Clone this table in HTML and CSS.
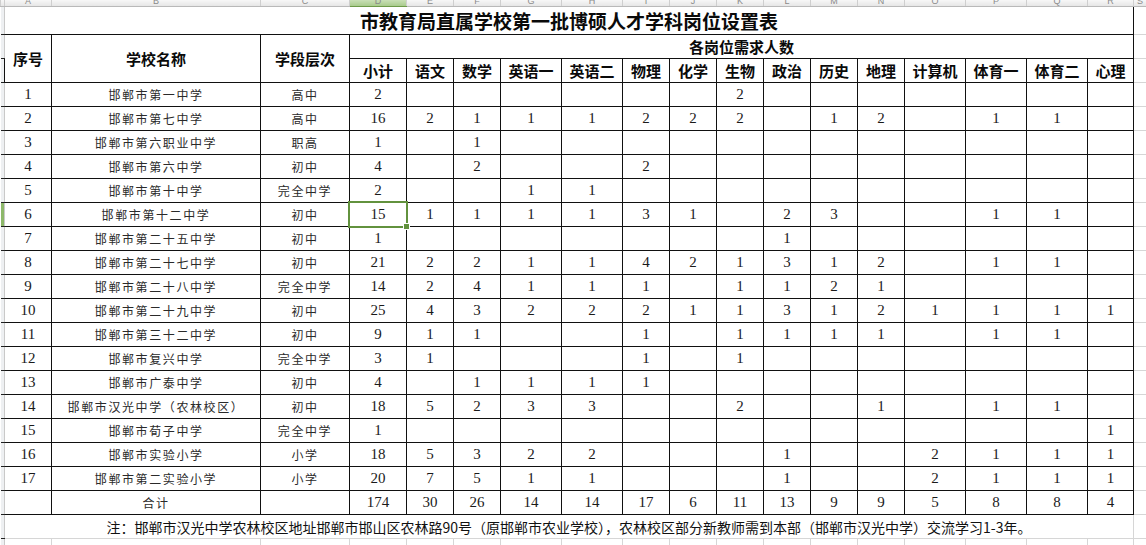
FILE: index.html
```html
<!DOCTYPE html>
<html lang="zh-CN">
<head>
<meta charset="utf-8">
<title>市教育局直属学校第一批博硕人才学科岗位设置表</title>
<link rel="stylesheet" href="styles.css">
</head>
<body>
<table class="sheet">
<colgroup>
<col class="w-rh"><col class="w-a"><col class="w-b"><col class="w-c"><col class="w-d">
<col class="w-s"><col class="w-s"><col class="w-m"><col class="w-m">
<col class="w-s"><col class="w-s"><col class="w-s"><col class="w-s"><col class="w-s"><col class="w-s">
<col class="w-m"><col class="w-m"><col class="w-m"><col class="w-r"><col class="w-x">
</colgroup>
<tr class="colhdr">
<th class="rh corner"></th>
<th><div class="lt"><span>A</span></div></th><th><div class="lt"><span>B</span></div></th><th><div class="lt"><span>C</span></div></th>
<th class="selcol"><div class="lt"><span>D</span></div></th><th><div class="lt"><span>E</span></div></th><th><div class="lt"><span>F</span></div></th>
<th><div class="lt"><span>G</span></div></th><th><div class="lt"><span>H</span></div></th><th><div class="lt"><span>I</span></div></th>
<th><div class="lt"><span>J</span></div></th><th><div class="lt"><span>K</span></div></th><th><div class="lt"><span>L</span></div></th>
<th><div class="lt"><span>M</span></div></th><th><div class="lt"><span>N</span></div></th><th><div class="lt"><span>O</span></div></th>
<th><div class="lt"><span>P</span></div></th><th><div class="lt"><span>Q</span></div></th><th><div class="lt"><span>R</span></div></th>
<th><div class="lt"><span>S</span></div></th>
</tr>
<tr class="trow">
<td class="rh"></td>
<td class="title" colspan="18">市教育局直属学校第一批博硕人才学科岗位设置表</td>
<td class="gx"></td>
</tr>
<tr class="hrow">
<td class="rh"></td>
<th class="g h" rowspan="2">序号</th>
<th class="g h" rowspan="2">学校名称</th>
<th class="g h" rowspan="2">学段层次</th>
<th class="g h" colspan="15">各岗位需求人数</th>
<td class="gx"></td>
</tr>
<tr class="hrow">
<td class="rh"></td>
<th class="g h">小计</th><th class="g h">语文</th><th class="g h">数学</th><th class="g h">英语一</th><th class="g h">英语二</th>
<th class="g h">物理</th><th class="g h">化学</th><th class="g h">生物</th><th class="g h">政治</th><th class="g h">历史</th>
<th class="g h">地理</th><th class="g h">计算机</th><th class="g h">体育一</th><th class="g h">体育二</th><th class="g h">心理</th>
<td class="gx"></td>
</tr>
<tr class="r"><td class="rh"></td><td class="g n">1</td><td class="g t">邯郸市第一中学</td><td class="g t">高中</td><td class="g n">2</td>
<td class="g n"></td><td class="g n"></td><td class="g n"></td><td class="g n"></td><td class="g n"></td><td class="g n"></td><td class="g n">2</td><td class="g n"></td><td class="g n"></td><td class="g n"></td><td class="g n"></td><td class="g n"></td><td class="g n"></td><td class="g n"></td><td class="gx"></td></tr>
<tr class="r"><td class="rh"></td><td class="g n">2</td><td class="g t">邯郸市第七中学</td><td class="g t">高中</td><td class="g n">16</td>
<td class="g n">2</td><td class="g n">1</td><td class="g n">1</td><td class="g n">1</td><td class="g n">2</td><td class="g n">2</td><td class="g n">2</td><td class="g n"></td><td class="g n">1</td><td class="g n">2</td><td class="g n"></td><td class="g n">1</td><td class="g n">1</td><td class="g n"></td><td class="gx"></td></tr>
<tr class="r"><td class="rh"></td><td class="g n">3</td><td class="g t">邯郸市第六职业中学</td><td class="g t">职高</td><td class="g n">1</td>
<td class="g n"></td><td class="g n">1</td><td class="g n"></td><td class="g n"></td><td class="g n"></td><td class="g n"></td><td class="g n"></td><td class="g n"></td><td class="g n"></td><td class="g n"></td><td class="g n"></td><td class="g n"></td><td class="g n"></td><td class="g n"></td><td class="gx"></td></tr>
<tr class="r"><td class="rh"></td><td class="g n">4</td><td class="g t">邯郸市第六中学</td><td class="g t">初中</td><td class="g n">4</td>
<td class="g n"></td><td class="g n">2</td><td class="g n"></td><td class="g n"></td><td class="g n">2</td><td class="g n"></td><td class="g n"></td><td class="g n"></td><td class="g n"></td><td class="g n"></td><td class="g n"></td><td class="g n"></td><td class="g n"></td><td class="g n"></td><td class="gx"></td></tr>
<tr class="r"><td class="rh"></td><td class="g n">5</td><td class="g t">邯郸市第十中学</td><td class="g t">完全中学</td><td class="g n">2</td>
<td class="g n"></td><td class="g n"></td><td class="g n">1</td><td class="g n">1</td><td class="g n"></td><td class="g n"></td><td class="g n"></td><td class="g n"></td><td class="g n"></td><td class="g n"></td><td class="g n"></td><td class="g n"></td><td class="g n"></td><td class="g n"></td><td class="gx"></td></tr>
<tr class="r"><td class="rh selrow"></td><td class="g n">6</td><td class="g t">邯郸市第十二中学</td><td class="g t">初中</td><td class="g n cur">15<div class="selbox"></div><div class="handle"></div></td>
<td class="g n">1</td><td class="g n">1</td><td class="g n">1</td><td class="g n">1</td><td class="g n">3</td><td class="g n">1</td><td class="g n"></td><td class="g n">2</td><td class="g n">3</td><td class="g n"></td><td class="g n"></td><td class="g n">1</td><td class="g n">1</td><td class="g n"></td><td class="gx"></td></tr>
<tr class="r"><td class="rh"></td><td class="g n">7</td><td class="g t">邯郸市第二十五中学</td><td class="g t">初中</td><td class="g n">1</td>
<td class="g n"></td><td class="g n"></td><td class="g n"></td><td class="g n"></td><td class="g n"></td><td class="g n"></td><td class="g n"></td><td class="g n">1</td><td class="g n"></td><td class="g n"></td><td class="g n"></td><td class="g n"></td><td class="g n"></td><td class="g n"></td><td class="gx"></td></tr>
<tr class="r"><td class="rh"></td><td class="g n">8</td><td class="g t">邯郸市第二十七中学</td><td class="g t">初中</td><td class="g n">21</td>
<td class="g n">2</td><td class="g n">2</td><td class="g n">1</td><td class="g n">1</td><td class="g n">4</td><td class="g n">2</td><td class="g n">1</td><td class="g n">3</td><td class="g n">1</td><td class="g n">2</td><td class="g n"></td><td class="g n">1</td><td class="g n">1</td><td class="g n"></td><td class="gx"></td></tr>
<tr class="r"><td class="rh"></td><td class="g n">9</td><td class="g t">邯郸市第二十八中学</td><td class="g t">完全中学</td><td class="g n">14</td>
<td class="g n">2</td><td class="g n">4</td><td class="g n">1</td><td class="g n">1</td><td class="g n">1</td><td class="g n"></td><td class="g n">1</td><td class="g n">1</td><td class="g n">2</td><td class="g n">1</td><td class="g n"></td><td class="g n"></td><td class="g n"></td><td class="g n"></td><td class="gx"></td></tr>
<tr class="r"><td class="rh"></td><td class="g n">10</td><td class="g t">邯郸市第二十九中学</td><td class="g t">初中</td><td class="g n">25</td>
<td class="g n">4</td><td class="g n">3</td><td class="g n">2</td><td class="g n">2</td><td class="g n">2</td><td class="g n">1</td><td class="g n">1</td><td class="g n">3</td><td class="g n">1</td><td class="g n">2</td><td class="g n">1</td><td class="g n">1</td><td class="g n">1</td><td class="g n">1</td><td class="gx"></td></tr>
<tr class="r"><td class="rh"></td><td class="g n">11</td><td class="g t">邯郸市第三十二中学</td><td class="g t">初中</td><td class="g n">9</td>
<td class="g n">1</td><td class="g n">1</td><td class="g n"></td><td class="g n"></td><td class="g n">1</td><td class="g n"></td><td class="g n">1</td><td class="g n">1</td><td class="g n">1</td><td class="g n">1</td><td class="g n"></td><td class="g n">1</td><td class="g n">1</td><td class="g n"></td><td class="gx"></td></tr>
<tr class="r"><td class="rh"></td><td class="g n">12</td><td class="g t">邯郸市复兴中学</td><td class="g t">完全中学</td><td class="g n">3</td>
<td class="g n">1</td><td class="g n"></td><td class="g n"></td><td class="g n"></td><td class="g n">1</td><td class="g n"></td><td class="g n">1</td><td class="g n"></td><td class="g n"></td><td class="g n"></td><td class="g n"></td><td class="g n"></td><td class="g n"></td><td class="g n"></td><td class="gx"></td></tr>
<tr class="r"><td class="rh"></td><td class="g n">13</td><td class="g t">邯郸市广泰中学</td><td class="g t">初中</td><td class="g n">4</td>
<td class="g n"></td><td class="g n">1</td><td class="g n">1</td><td class="g n">1</td><td class="g n">1</td><td class="g n"></td><td class="g n"></td><td class="g n"></td><td class="g n"></td><td class="g n"></td><td class="g n"></td><td class="g n"></td><td class="g n"></td><td class="g n"></td><td class="gx"></td></tr>
<tr class="r"><td class="rh"></td><td class="g n">14</td><td class="g t">邯郸市汉光中学（农林校区）</td><td class="g t">初中</td><td class="g n">18</td>
<td class="g n">5</td><td class="g n">2</td><td class="g n">3</td><td class="g n">3</td><td class="g n"></td><td class="g n"></td><td class="g n">2</td><td class="g n"></td><td class="g n"></td><td class="g n">1</td><td class="g n"></td><td class="g n">1</td><td class="g n">1</td><td class="g n"></td><td class="gx"></td></tr>
<tr class="r"><td class="rh"></td><td class="g n">15</td><td class="g t">邯郸市荀子中学</td><td class="g t">完全中学</td><td class="g n">1</td>
<td class="g n"></td><td class="g n"></td><td class="g n"></td><td class="g n"></td><td class="g n"></td><td class="g n"></td><td class="g n"></td><td class="g n"></td><td class="g n"></td><td class="g n"></td><td class="g n"></td><td class="g n"></td><td class="g n"></td><td class="g n">1</td><td class="gx"></td></tr>
<tr class="r"><td class="rh"></td><td class="g n">16</td><td class="g t">邯郸市实验小学</td><td class="g t">小学</td><td class="g n">18</td>
<td class="g n">5</td><td class="g n">3</td><td class="g n">2</td><td class="g n">2</td><td class="g n"></td><td class="g n"></td><td class="g n"></td><td class="g n">1</td><td class="g n"></td><td class="g n"></td><td class="g n">2</td><td class="g n">1</td><td class="g n">1</td><td class="g n">1</td><td class="gx"></td></tr>
<tr class="r"><td class="rh"></td><td class="g n">17</td><td class="g t">邯郸市第二实验小学</td><td class="g t">小学</td><td class="g n">20</td>
<td class="g n">7</td><td class="g n">5</td><td class="g n">1</td><td class="g n">1</td><td class="g n"></td><td class="g n"></td><td class="g n"></td><td class="g n">1</td><td class="g n"></td><td class="g n"></td><td class="g n">2</td><td class="g n">1</td><td class="g n">1</td><td class="g n">1</td><td class="gx"></td></tr>
<tr class="r"><td class="rh"></td><td class="g n"></td><td class="g t">合计</td><td class="g t"></td><td class="g n">174</td>
<td class="g n">30</td><td class="g n">26</td><td class="g n">14</td><td class="g n">14</td><td class="g n">17</td><td class="g n">6</td><td class="g n">11</td><td class="g n">13</td><td class="g n">9</td><td class="g n">9</td><td class="g n">5</td><td class="g n">8</td><td class="g n">8</td><td class="g n">4</td><td class="gx"></td></tr>
<tr class="r"><td class="rh"></td>
<td class="note" colspan="18">注：邯郸市汉光中学农林校区地址邯郸市邯山区农林路90号（原邯郸市农业学校），农林校区部分新教师需到本部（邯郸市汉光中学）交流学习1-3年。</td>
<td class="gx"></td></tr>
<tr class="last"><td class="rh"></td>
<td class="gl"></td><td class="gl"></td><td class="gl"></td><td class="gl"></td><td class="gl"></td><td class="gl"></td><td class="gl"></td><td class="gl"></td><td class="gl"></td>
<td class="gl"></td><td class="gl"></td><td class="gl"></td><td class="gl"></td><td class="gl"></td><td class="gl"></td><td class="gl"></td><td class="gl"></td><td class="gl"></td><td class="gl"></td>
</tr>
</table>
</body>
</html>
```

FILE: styles.css
```css
html, body {
  margin: 0;
  padding: 0;
  background: #ffffff;
  overflow: hidden;
}
body {
  width: 1146px;
  height: 545px;
}
.sheet {
  border-collapse: collapse;
  table-layout: fixed;
  width: 1146px;
  font-family: "Noto Sans CJK SC", "Noto Sans", sans-serif;
  color: #111;
}
.sheet td, .sheet th {
  padding: 0;
  text-align: center;
  vertical-align: middle;
  overflow: hidden;
  white-space: nowrap;
}
.w-rh { width: 4px; }
.w-a { width: 47px; }
.w-b { width: 209px; }
.w-c { width: 89px; }
.w-d { width: 57px; }
.w-s { width: 47px; }
.w-m { width: 61px; }
.w-r { width: 46px; }
.w-x { width: 13px; }

/* column header strip */
.colhdr th {
  height: 6px;
  background: linear-gradient(#f7f7f7, #e6e6e6);
  border-left: 1px solid #cfcfcf;
  border-right: 1px solid #cfcfcf;
  border-bottom: 1px solid #b9b9b9;
  font-weight: normal;
}
.colhdr th.selcol {
  background: linear-gradient(#c9dfb6, #a9cb8c);
  border-bottom: 1px solid #6d9a48;
}
.lt {
  height: 6px;
  overflow: hidden;
}
.lt span {
  display: block;
  margin-top: -5px;
  font: 9px/12px "Liberation Sans", sans-serif;
  color: #8a8a8a;
}

/* row header strip */
.rh {
  background: #eef0f2;
  border-top: 1px solid #222;
  border-bottom: 1px solid #222;
  border-right: 1px solid #c9c9c9;
}
.rh.corner {
  border-top: none;
  border-bottom: 1px solid #b9b9b9;
}
.rh.selrow {
  background: #8db86a;
}

/* title row */
.trow td { height: 26px; }
.title {
  font-size: 19px;
  font-weight: bold;
  border-left: 1px solid #c9c9c9;
  border-right: 1px solid #111;
  border-bottom: 1px solid #111;
  color: #0a0a0a;
}

.hrow th, .hrow td { height: 23px; }
.r td { height: 23px; }

.g {
  border: 1px solid #111;
}
.h {
  font-size: 15px;
  font-weight: bold;
  color: #0a0a0a;
}
.n {
  font-family: "Liberation Serif", serif;
  font-size: 15px;
  color: #1a1a1a;
}
.t {
  font-size: 12px;
  letter-spacing: 1.6px;
  color: #2a2a2a;
}

.gx {
  border: 1px solid #d6d6d6;
}

.note {
  font-size: 14px;
  color: #111;
  border-top: 1px solid #111;
  border-left: 1px solid #d6d6d6;
  border-right: 1px solid #d6d6d6;
  border-bottom: 1px solid #d6d6d6;
}

.last td { height: 8px; }
.gl {
  border-left: 1px solid #d6d6d6;
  border-right: 1px solid #d6d6d6;
}

/* active cell selection */
.sheet td.cur {
  position: relative;
  overflow: visible;
}
.selbox {
  position: absolute;
  left: -2px;
  top: -2px;
  right: -2px;
  bottom: -2px;
  border: 2px solid #62923d;
  pointer-events: none;
}
.handle {
  position: absolute;
  right: -4px;
  bottom: -4px;
  width: 5px;
  height: 5px;
  background: #62923d;
  border: 1px solid #fff;
}
```
